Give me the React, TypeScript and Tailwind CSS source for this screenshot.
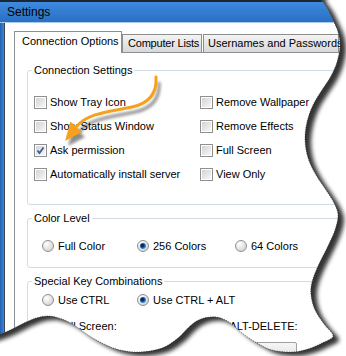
import type { ReactNode } from "react";

// torn page edge, right side top->bottom then bottom right->left
const EDGE: number[][] = [
  [320, -2], [327, 8], [333, 20], [338, 32], [340, 46], [337, 62], [331, 76], [322, 90],
  [313, 105], [307, 122], [305, 140], [308, 158], [316, 175], [326, 190], [334, 203],
  [338, 215], [335, 230], [327, 248], [318, 266], [312, 282], [311, 295], [315, 310],
  [324, 324], [333, 336], [322, 343], [308, 349], [292, 352], [272, 350], [257, 343],
  [242, 333], [229, 322], [216, 317], [201, 319], [190, 326], [178, 338], [162, 348],
  [140, 352], [120, 350], [104, 344], [88, 335], [74, 325], [62, 319], [49, 316],
  [36, 318], [22, 324], [8, 331], [-10, 338],
];

const smooth = (pts: number[][]) => {
  let d = `M${pts[0][0]} ${pts[0][1]}`;
  for (let i = 0; i < pts.length - 1; i++) {
    const p0 = pts[i - 1] || pts[i];
    const p1 = pts[i];
    const p2 = pts[i + 1];
    const p3 = pts[i + 2] || p2;
    const c1 = [p1[0] + (p2[0] - p0[0]) / 6, p1[1] + (p2[1] - p0[1]) / 6];
    const c2 = [p2[0] - (p3[0] - p1[0]) / 6, p2[1] - (p3[1] - p1[1]) / 6];
    d += ` C${c1[0].toFixed(1)} ${c1[1].toFixed(1)} ${c2[0].toFixed(1)} ${c2[1].toFixed(1)} ${p2[0]} ${p2[1]}`;
  }
  return d;
};

const edgePath = smooth(EDGE);
const contentShape = `${edgePath} L-10 -10 L320 -10 Z`;
const outsideShape = `M-20 -20 H370 V380 H-20 Z ${contentShape}`;

const Checkbox = ({ checked = false }: { checked?: boolean }) => (
  <span className="relative w-[13px] h-[13px] shrink-0 border border-[#8e8f8f] bg-white p-px">
    <span className="block w-full h-full bg-gradient-to-br from-[#d4d4d4] to-[#f6f6f6]" />
    {checked && (
      <svg className="absolute inset-0" width="11" height="11" viewBox="0 0 11 11">
        <path d="M2.5 5.5 L4.5 8 L8.5 2.5" fill="none" stroke="#3b5a9e" strokeWidth="1.8" />
      </svg>
    )}
  </span>
);

const Radio = ({ checked = false }: { checked?: boolean }) => (
  <span className="w-[12px] h-[12px] shrink-0 rounded-full border border-[#8e8f8f] bg-[radial-gradient(circle_at_35%_30%,#ffffff,#e2e2e2_55%,#c9c9c9)] flex items-center justify-center">
    {checked && (
      <span className="w-[6px] h-[6px] rounded-full bg-[radial-gradient(circle_at_40%_40%,#0b2a5c_25%,#2f7fd6_60%,#7cc2ff)]" />
    )}
  </span>
);

const Row = ({ children, checked }: { children: ReactNode; checked?: boolean }) => (
  <div className="h-[24px] flex items-center gap-[3px] whitespace-nowrap">
    <Checkbox checked={checked} />
    <span>{children}</span>
  </div>
);

const RadioItem = ({ children, checked }: { children: ReactNode; checked?: boolean }) => (
  <div className="flex items-center gap-[4px] whitespace-nowrap">
    <Radio checked={checked} />
    <span>{children}</span>
  </div>
);

const Group = ({ title, className, children }: { title: string; className?: string; children: ReactNode }) => (
  <fieldset className={`border border-[#d3dbe3] rounded-[3px] ${className ?? ""}`}>
    <legend className="ml-[4px] px-[2px] leading-[14px] whitespace-nowrap">{title}</legend>
    {children}
  </fieldset>
);

const App = () => {
  return (
    <div className="relative w-[346px] h-[356px] overflow-hidden bg-white text-black text-[11px] leading-[13px] font-['Liberation_Sans',Arial,sans-serif]">
      {/* title bar */}
      <div className="h-[22px] border-t-2 border-[#1d2633] bg-gradient-to-b from-[#3d8ade] to-[#2a70c4] pl-[7px] pt-[3px] text-[12px] leading-[15px] text-black">
        Settings
      </div>
      <div className="h-px bg-[#a9c9ee]" />

      <div className="flex h-[333px]">
        <div className="w-[4px] bg-gradient-to-r from-[#2360b0] to-[#3b86d8]" />
        <div className="flex-1 border-l border-[#3c4650] pl-[9px] pt-[8px]">
          {/* tabs */}
          <div className="flex items-end whitespace-nowrap">
            <div className="relative z-10 -mb-px h-[22px] w-[108px] border border-b-0 border-[#8b9097] bg-white pl-[7px] pt-[3px]">
              Connection Options
            </div>
            <div className="h-[18px] w-[80px] border border-b-0 border-[#8d8d8d] bg-gradient-to-b from-[#f4f4f4] to-[#d8d8d8] pl-[5px] pt-[2px] tracking-[-0.2px]">
              Computer Lists
            </div>
            <div className="ml-px h-[18px] w-[136px] border border-b-0 border-[#8d8d8d] bg-gradient-to-b from-[#f4f4f4] to-[#d8d8d8] pl-[4px] pt-[2px]">
              Usernames and Passwords
            </div>
          </div>

          {/* tab panel */}
          <div className="border-t border-l border-[#8b9097] h-[300px] pl-[12px] pt-[10px] pr-[4px]">
            <Group title="Connection Settings" className="pb-[18px]">
              <div className="grid grid-cols-[166px_1fr] pl-[6px] mt-[13px]">
                <div>
                  <Row>Show Tray Icon</Row>
                  <Row>Show Status Window</Row>
                  <Row checked>Ask permission</Row>
                  <Row>Automatically install server</Row>
                </div>
                <div>
                  <Row>Remove Wallpaper</Row>
                  <Row>Remove Effects</Row>
                  <Row>Full Screen</Row>
                  <Row>View Only</Row>
                </div>
              </div>
            </Group>

            <Group title="Color Level" className="mt-[6px] pb-[11px]">
              <div className="grid grid-cols-[95px_98px_1fr] pl-[14px] mt-[11px] h-[20px] items-center">
                <RadioItem>Full Color</RadioItem>
                <RadioItem checked>256 Colors</RadioItem>
                <RadioItem>64 Colors</RadioItem>
              </div>
            </Group>

            <Group title="Special Key Combinations" className="mt-[6px] pb-[20px]">
              <div className="grid grid-cols-[95px_1fr] pl-[14px] mt-[2px] h-[20px] items-center">
                <RadioItem>Use CTRL</RadioItem>
                <RadioItem checked>Use CTRL + ALT</RadioItem>
              </div>
              <div className="grid grid-cols-[139px_1fr] pl-[30px] mt-[10px] whitespace-nowrap">
                <span>Full Screen:</span>
                <span>CTRL-ALT-DELETE:</span>
              </div>
              <div className="pl-[169px] mt-[9px]">
                <div className="h-[20px] w-[100px] border border-[#a0a0a0] rounded-[2px] bg-gradient-to-b from-[#f6f6f6] to-[#dedede]" />
              </div>
            </Group>
          </div>
        </div>
      </div>

      {/* orange annotation arrow */}
      <svg className="absolute inset-0 pointer-events-none" width="346" height="356" viewBox="0 0 346 356">
        <defs>
          <filter id="arrowShadow" x="-20%" y="-20%" width="140%" height="140%">
            <feGaussianBlur stdDeviation="1.6" />
          </filter>
        </defs>
        <g transform="translate(3 5)" filter="url(#arrowShadow)" opacity="0.45">
          <path d="M156 77 C157 92 151 103 132 107 C108 112 88 113 76 127" fill="none" stroke="#000" strokeWidth="3" />
          <polygon points="65,141 70.5,121.5 82,132" fill="#000" />
        </g>
        <path d="M156 77 C157 92 151 103 132 107 C108 112 88 113 76 127" fill="none" stroke="#f6a11c" strokeWidth="3" strokeLinecap="round" />
        <polygon points="65,141 70.5,121.5 82,132" fill="#f6a11c" />
      </svg>

      {/* torn edge with drop shadow */}
      <svg className="absolute inset-0 pointer-events-none" width="346" height="356" viewBox="0 0 346 356">
        <defs>
          <filter id="tearShadow" x="-10%" y="-10%" width="120%" height="120%">
            <feGaussianBlur stdDeviation="2" />
          </filter>
          <clipPath id="outside">
            <path d={outsideShape} clipRule="evenodd" />
          </clipPath>
        </defs>
        <path d={outsideShape} fill="#fff" fillRule="evenodd" />
        <g clipPath="url(#outside)">
          <path d={contentShape} transform="translate(6 4)" fill="#000" opacity="0.8" filter="url(#tearShadow)" />
        </g>
        <path d={edgePath} fill="none" stroke="#222" strokeWidth="0.8" strokeDasharray="1 1.4" opacity="0.7" />
      </svg>
    </div>
  );
};

export default App;
